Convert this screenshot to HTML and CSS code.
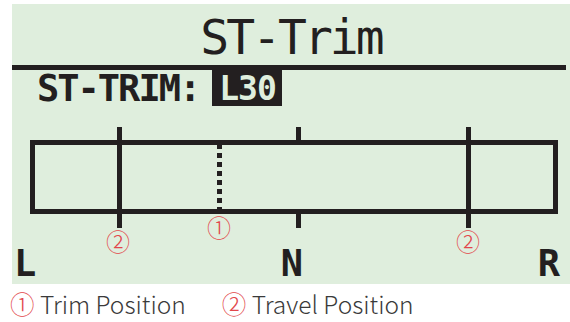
FILE: index.html
```html
<!DOCTYPE html>
<html lang="en">
<head>
    <meta charset="UTF-8">
    <meta name="viewport" content="width=device-width, initial-scale=1.0">
    <title>ST-Trim</title>
    <link rel="stylesheet" href="styles.css">
</head>
<body>
    <div class="screen">
        <h1 class="title">ST-Trim</h1>
        <div class="rule"></div>
        <div class="setting">
            <span class="label">ST-TRIM:</span>
            <span class="value">L30</span>
        </div>
        <svg class="gauge" width="558" height="164" viewBox="12 120 558 164">
            <!-- trim bar -->
            <rect x="32.5" y="142.5" width="523" height="69" fill="none" stroke="#231f20" stroke-width="5"/>
            <!-- travel positions -->
            <line x1="119.5" y1="127" x2="119.5" y2="228" stroke="#231f20" stroke-width="5"/>
            <line x1="468.5" y1="127" x2="468.5" y2="228" stroke="#231f20" stroke-width="5"/>
            <!-- neutral ticks -->
            <line x1="298.5" y1="127" x2="298.5" y2="141" stroke="#231f20" stroke-width="5"/>
            <line x1="298.5" y1="213" x2="298.5" y2="228" stroke="#231f20" stroke-width="5"/>
            <!-- trim position -->
            <line x1="219.5" y1="144" x2="219.5" y2="210" stroke="#231f20" stroke-width="5" stroke-dasharray="5 4"/>

            <text class="mark" x="219" y="237">①</text>
            <text class="mark" x="118" y="251">②</text>
            <text class="mark" x="468" y="251">②</text>

            <text class="end" x="14" y="276">L</text>
            <text class="end" x="292" y="276" text-anchor="middle">N</text>
            <text class="end" x="560" y="276" text-anchor="end">R</text>
        </svg>
    </div>
    <div class="legend">
        <span class="item"><span class="num">①</span> Trim Position</span>
        <span class="item"><span class="num">②</span> Travel Position</span>
    </div>
</body>
</html>
```

FILE: styles.css
```css
body {
    margin: 0;
    padding: 0;
    background-color: #ffffff;
    width: 570px;
    height: 322px;
    overflow: hidden;
}

.screen {
    margin: 4px 0 0 12px;
    height: 280px;
    background-color: #dfeedd;
    display: flex;
    flex-direction: column;
}

.title {
    margin: 0;
    padding-top: 9px;
    font-family: "DejaVu Sans Mono", monospace;
    font-weight: normal;
    font-size: 48px;
    line-height: 48px;
    letter-spacing: -3px;
    color: #231f20;
    text-align: center;
}

.rule {
    margin: 4px 4px 0 0;
    height: 5px;
    background-color: #231f20;
}

.setting {
    display: flex;
    align-items: flex-start;
    gap: 13px;
    padding-left: 25px;
    height: 36px;
}

.label {
    padding-top: 1px;
    font-family: "DejaVu Sans Mono", monospace;
    font-weight: bold;
    font-size: 37px;
    line-height: 36px;
    letter-spacing: -2px;
    color: #231f20;
}

.value {
    height: 34px;
    padding: 2px 6px 0 7px;
    background-color: #231f20;
    color: #dfeedd;
    font-family: "DejaVu Sans Mono", monospace;
    font-weight: bold;
    font-size: 33px;
    line-height: 34px;
    letter-spacing: -1px;
}

.gauge {
    display: block;
    flex-shrink: 0;
    margin-top: 14px;
}

.mark {
    font-family: "Noto Sans CJK JP", sans-serif;
    font-size: 24px;
    font-weight: 300;
    fill: #e2474b;
    text-anchor: middle;
}

.end {
    font-family: "DejaVu Sans Mono", monospace;
    font-weight: bold;
    font-size: 37px;
    fill: #231f20;
}

.legend {
    display: flex;
    gap: 36px;
    padding-left: 10px;
    font-family: "Noto Sans CJK JP", sans-serif;
    font-weight: 300;
    font-size: 24.5px;
    line-height: 40px;
    color: #3a3a3a;
}

.num {
    color: #e2474b;
}
```
